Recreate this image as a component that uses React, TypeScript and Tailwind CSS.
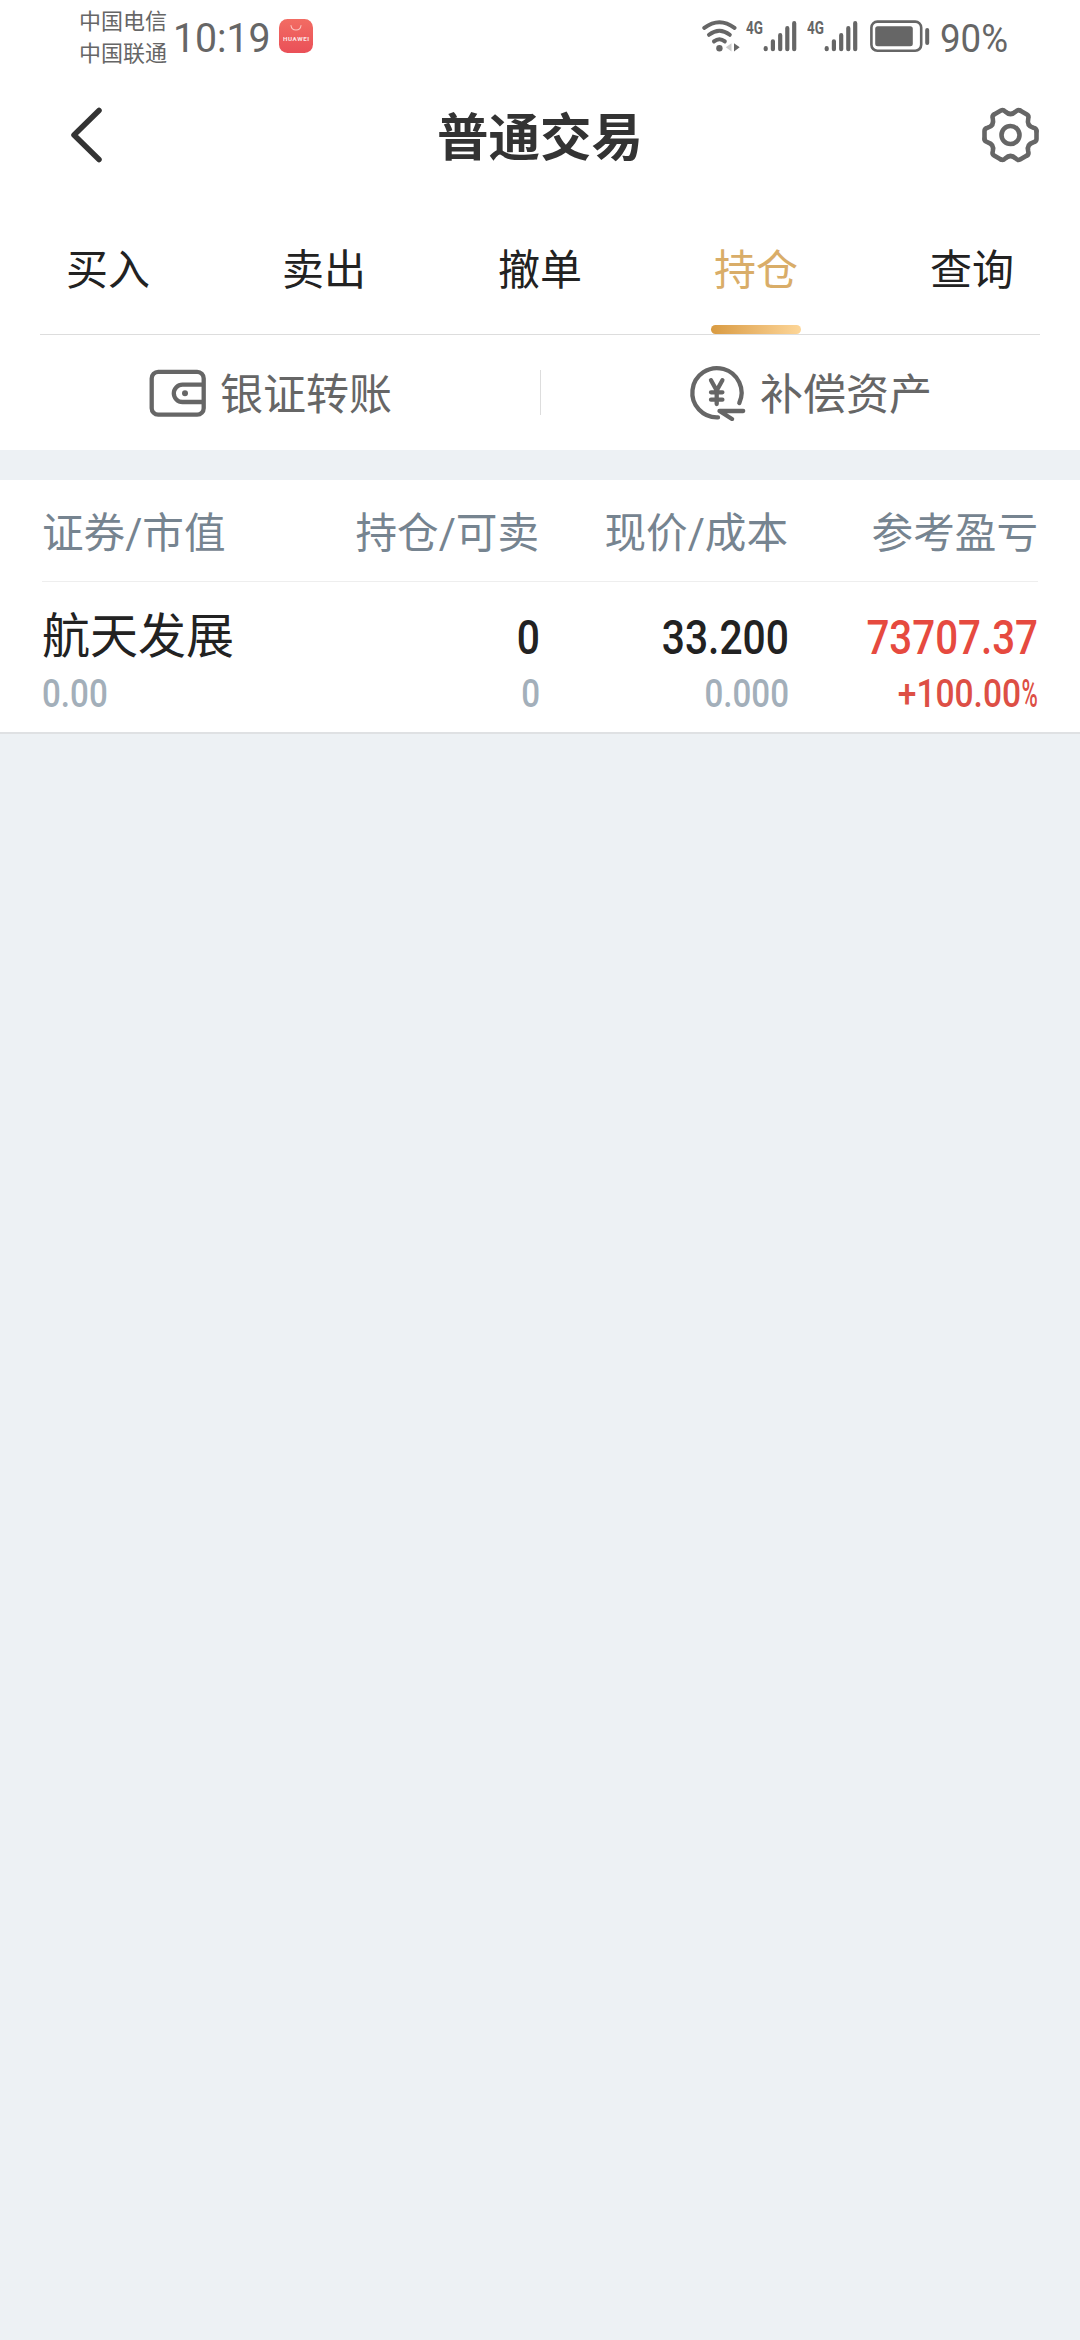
import clsx from "clsx";

const tabs = [
  { id: "buy", label: "买入" },
  { id: "sell", label: "卖出" },
  { id: "cancel", label: "撤单" },
  { id: "position", label: "持仓" },
  { id: "query", label: "查询" },
];

const positions = [
  {
    name: "航天发展",
    marketValue: "0.00",
    held: "0",
    available: "0",
    price: "33.200",
    cost: "0.000",
    profit: "73707.37",
    profitRate: "+100.00",
  },
];

const WifiIcon = () => (
  <svg width="40" height="34" viewBox="0 0 40 34" fill="none" className="mt-[19px] shrink-0">
    <g stroke="#666" strokeWidth="4" strokeLinecap="round">
      <path d="M3.3 8.8Q18.4 -2.4 33.5 8.8" />
      <path d="M8 15.8Q18.4 7.6 28.8 15.8" />
      <path d="M13 22.4Q18.4 18 23.8 22.4" />
    </g>
    <circle cx="18.4" cy="29.3" r="3.2" fill="#666" />
    <path d="M30.5 24.2V32.4L24.8 28.3Z" fill="#ccc" />
    <path d="M33 24.2V32.4L38.7 28.3Z" fill="#666" />
  </svg>
);

const SignalIcon = () => (
  <div className="relative w-[61px] h-[34px] mt-[19px] shrink-0">
    <span className="absolute left-[5px] top-0 text-[19px] leading-[18px] font-bold origin-left scale-x-[0.71]">4G</span>
    <svg width="61" height="34" viewBox="0 0 61 34" stroke="#666" strokeWidth="4.2" strokeLinecap="round">
      <path d="M24.7 29.2V30.2M31.9 22.3V30.2M39.2 16.2V30.2M46.3 9.2V30.2M53.2 4.2V30.2" />
    </svg>
  </div>
);

const BatteryIcon = () => (
  <svg width="61" height="34" viewBox="0 0 61 34" fill="none" className="mt-[19px] shrink-0">
    <rect x="1.4" y="2.6" width="49.8" height="29.2" rx="6" stroke="#666" strokeWidth="2.6" />
    <rect x="5.2" y="7.2" width="37.6" height="20" rx="2.5" fill="#666" />
    <path d="M57.2 11V24" stroke="#666" strokeWidth="4" strokeLinecap="round" />
  </svg>
);

const StoreBadge = () => (
  <svg width="34" height="34" viewBox="0 0 34 34" fill="none" className="mt-[19px] shrink-0">
    <defs>
      <linearGradient id="store" x1="0" y1="0" x2="0" y2="1">
        <stop offset="0" stopColor="#f26c63" />
        <stop offset="1" stopColor="#ea5058" />
      </linearGradient>
    </defs>
    <rect width="34" height="34" rx="8.5" fill="url(#store)" />
    <path d="M12 6.5Q12.5 11 17 11T22 6.5" stroke="#fbc4c0" strokeWidth="1.1" strokeLinecap="round" />
    <text x="17" y="22" textAnchor="middle" textLength="26" fontSize="6.2" fontWeight="700" fill="#fff" opacity="0.85">
      HUAWEI
    </text>
  </svg>
);

const GearIcon = () => (
  <svg width="60" height="60" viewBox="-30.5 -29 60 60" fill="none" stroke="#666" strokeWidth="4.6" strokeLinecap="round" strokeLinejoin="round">
    {[0, 60, 120, 180, 240, 300].map((angle) => (
      <path key={angle} transform={`rotate(${angle})`} d="M26 -4V4Q26 6.5 23 7.2C18.5 8.5 16.6 11.8 17.7 16.3Q18.6 19.3 16.5 20.5" />
    ))}
    <circle r="9" />
  </svg>
);

const WalletIcon = () => (
  <svg width="60" height="60" viewBox="0 0 60 60" fill="none" stroke="#666" strokeWidth="4.3" className="mb-[4px]">
    <rect x="4.7" y="10.9" width="52" height="42.8" rx="6.5" />
    <path d="M56.5 23.6H35.5A8.7 8.7 0 0 0 35.5 41H56.5" />
    <circle cx="38" cy="32.3" r="3" fill="#666" stroke="none" />
  </svg>
);

const YenIcon = () => (
  <svg width="60" height="60" viewBox="0 0 60 60" fill="none" stroke="#666" strokeWidth="4.3" strokeLinecap="round" strokeLinejoin="round" className="mb-[4px]">
    <path d="M52.3 42A24.6 24.6 0 1 0 31 56.3" />
    <path d="M56.2 50H32.5L45 58" />
    <path d="M24 19.2L29.7 29.5L35.4 19.2M29.7 29.5V43M24 31.3H35.4M24 38.7H35.4" />
  </svg>
);

const StatusBar = () => (
  <div className="flex h-[76px] pl-[79px] text-[#666]">
    <div className="w-[94px] pt-[11px] text-[22px] leading-[21px]">
      <p className="mb-[11px]">中国电信</p>
      <p>中国联通</p>
    </div>
    <div className="w-[106px] pt-[17px]">
      <span className="inline-block origin-left scale-x-[0.98] whitespace-nowrap text-[40px] leading-[44px]">10:19</span>
    </div>
    <StoreBadge />
    <div className="ml-auto flex pr-[69px]">
      <WifiIcon />
      <SignalIcon />
      <SignalIcon />
      <div className="w-[7px]" />
      <BatteryIcon />
      <div className="w-[80px] pl-[9px] pt-[17px]">
        <span className="inline-block origin-left scale-x-[0.94] text-[39px] leading-[44px]">90%</span>
      </div>
    </div>
  </div>
);

const App = () => {
  return (
    <div className="w-[1080px] h-[2340px] overflow-hidden bg-[#edf1f4] font-['Roboto','Noto_Sans_CJK_SC',sans-serif] text-[#222]">
      <div className="h-[450px] bg-white">
        <StatusBar />

        {/* Title */}
        <header className="flex h-[120px] items-center px-[40px]">
          <div className="flex flex-1">
            <svg width="60" height="60" viewBox="0 0 60 60" fill="none" stroke="#333" strokeWidth="5.5" strokeLinecap="round" strokeLinejoin="round" className="ml-[30px]">
              <path d="M29 4.5L4 29L29 53.5" />
            </svg>
          </div>
          <h1 className="pt-[5px] text-[51.5px] font-bold leading-[60px] text-[#333]">普通交易</h1>
          <div className="flex flex-1 justify-end">
            <GearIcon />
          </div>
        </header>

        {/* Tabs */}
        <nav className="flex h-[138px]">
          {tabs.map((tab) => (
            <div key={tab.id} className="flex flex-1 flex-col items-center justify-between pt-[45px]">
              <span className={clsx("text-[42px] leading-[60px]", tab.id === "position" && "text-[#d9ad68]")}>{tab.label}</span>
              {tab.id === "position" && <div className="h-[9px] w-[90px] rounded-full bg-linear-to-r from-[#d99b41] to-[#fdd698]" />}
            </div>
          ))}
        </nav>
        <div className="mx-[40px] h-px bg-[#ddd]" />

        {/* Shortcuts */}
        <div className="flex h-[115px] items-center text-[43px] leading-[60px] text-[#666]">
          <div className="flex w-[540px] items-center gap-[13px] pl-[147px]">
            <WalletIcon />
            <span className="pt-[4px]">银证转账</span>
          </div>
          <div className="h-[45px] w-px bg-[#ddd]" />
          <div className="flex items-center gap-[13px] pl-[146px]">
            <YenIcon />
            <span className="pt-[4px]">补偿资产</span>
          </div>
        </div>
      </div>

      {/* Positions */}
      <div className="mt-[30px] border-b-2 border-[#dfe1e3] bg-white px-[42px]">
        <div className="grid h-[102px] grid-cols-[240px_257px_249px_250px] items-center border-b border-[#eee] pt-[6px] text-[41.6px] leading-[60px] text-[#768490]">
          <span>证券/市值</span>
          <span className="text-right">持仓/可卖</span>
          <span className="text-right">现价/成本</span>
          <span className="text-right">参考盈亏</span>
        </div>
        {positions.map((item) => (
          <div key={item.name} className="h-[150px] pt-[25px]">
            <div className="grid h-[59px] grid-cols-[241px_257px_249px_249px] text-right text-[48px] font-medium leading-[62px]">
              <span className="text-left font-normal leading-[60px]">{item.name}</span>
              <span className="origin-right scale-x-[0.85]">{item.held}</span>
              <span className="origin-right scale-x-[0.85]">{item.price}</span>
              <span className="origin-right scale-x-[0.84] text-[#e64a3f]">{item.profit}</span>
            </div>
            <div className="grid h-[50px] grid-cols-[241px_257px_249px_249px] text-right text-[39px] font-medium leading-[56px] text-[#a3afba]">
              <span className="origin-left scale-x-[0.85] text-left">{item.marketValue}</span>
              <span className="origin-right scale-x-[0.85]">{item.available}</span>
              <span className="origin-right scale-x-[0.85]">{item.cost}</span>
              <span className="flex origin-right scale-x-[0.86] justify-end text-[#dd4f45]">
                {item.profitRate}
                <span className="-ml-[9px] inline-block origin-right scale-x-[0.66]">%</span>
              </span>
            </div>
          </div>
        ))}
      </div>
    </div>
  );
};

export default App;
